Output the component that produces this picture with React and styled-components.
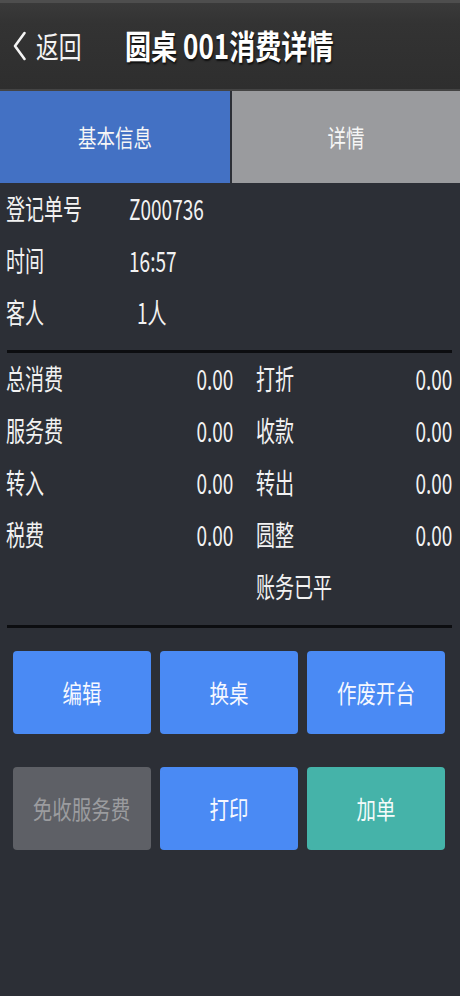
import React from 'react';
import styled, { createGlobalStyle } from 'styled-components';

const GlobalStyle = createGlobalStyle`
    html, body {
        margin: 0;
        padding: 0;
        background: #2c2f36;
    }
    body {
        font-family: "Noto Sans CJK SC", "Noto Sans", sans-serif;
        color: #f2f2f2;
    }
`;

const info = [
    { label: '登记单号', value: 'Z000736' },
    { label: '时间', value: '16:57' },
    { label: '客人', value: '1人', indent: true },
];

const amounts = [
    ['总消费', '0.00', '打折', '0.00'],
    ['服务费', '0.00', '收款', '0.00'],
    ['转入', '0.00', '转出', '0.00'],
    ['税费', '0.00', '圆整', '0.00'],
];

const actions = [
    { text: '编辑', kind: 'blue' },
    { text: '换桌', kind: 'blue' },
    { text: '作废开台', kind: 'blue' },
    { text: '免收服务费', kind: 'disabled' },
    { text: '打印', kind: 'blue' },
    { text: '加单', kind: 'teal' },
];

const BackIcon = () => (
    <svg width="15" height="30" viewBox="0 0 15 30">
        <polyline points="12.5,2 3,15 12.5,28" fill="none" stroke="#f4f4f4" strokeWidth="2.6" strokeLinecap="round" strokeLinejoin="round" />
    </svg>
);

const App = () => {
    return (
        <Page>
            <GlobalStyle />
            <Header>
                <Back>
                    <BackIcon />
                    <Narrow $origin="left" $sx={0.76}>返回</Narrow>
                </Back>
                <Title>圆桌 001消费详情</Title>
            </Header>
            <Tabs>
                <Tab active>
                    <Narrow $sx={0.77}>基本信息</Narrow>
                </Tab>
                <Tab>
                    <Narrow $sx={0.77}>详情</Narrow>
                </Tab>
            </Tabs>
            <InfoList>
                {info.map((row) => (
                    <InfoRow key={row.label}>
                        <InfoLabel>
                            <Narrow $origin="left" $sx={0.68}>{row.label}</Narrow>
                        </InfoLabel>
                        <InfoValue indent={row.indent}>
                            <Narrow $origin="left" $sx={0.68}>{row.value}</Narrow>
                        </InfoValue>
                    </InfoRow>
                ))}
            </InfoList>
            <Divider />
            <AmountGrid>
                {amounts.map((row) => (
                    <React.Fragment key={row[0]}>
                        <AmountCell>
                            <Narrow $origin="left" $sx={0.68}>{row[0]}</Narrow>
                            <Narrow $origin="right" $sx={0.68}>{row[1]}</Narrow>
                        </AmountCell>
                        <AmountCell>
                            <Narrow $origin="left" $sx={0.68}>{row[2]}</Narrow>
                            <Narrow $origin="right" $sx={0.68}>{row[3]}</Narrow>
                        </AmountCell>
                    </React.Fragment>
                ))}
                <AmountCell />
                <AmountCell>
                    <Narrow $origin="left" $sx={0.68}>账务已平</Narrow>
                </AmountCell>
            </AmountGrid>
            <Divider second />
            <Actions>
                {actions.map((a) => (
                    <ActionButton key={a.text} kind={a.kind}>
                        <Narrow $sx={0.78}>{a.text}</Narrow>
                    </ActionButton>
                ))}
            </Actions>
        </Page>
    );
};

// the screen uses a tall condensed font, so text is squeezed horizontally
const Narrow = styled.span`
    display: inline-block;
    white-space: nowrap;
    line-height: 1;
    transform: scaleX(${(p) => p.$sx || 0.7});
    transform-origin: ${(p) => p.$origin || 'center'} center;
`;

const Page = styled.div`
    width: 460px;
    min-height: 996px;
    background: #2c2f36;
`;

const Header = styled.div`
    height: 86px;
    display: flex;
    align-items: center;
    background: linear-gradient(#3a3a3a 0px, #333333 20px, #2e2e2e 100%);
    border-top: 3px solid #4e4e4e;
    border-bottom: 2px solid #444;
    box-sizing: content-box;
`;

const Back = styled.div`
    display: flex;
    align-items: center;
    gap: 9px;
    padding-left: 12px;
    width: 113px;
    font-size: 30px;
    color: #f4f4f4;
    span {
        margin-top: -2px;
    }
`;

const Title = styled.div`
    font-size: 33px;
    font-weight: bold;
    line-height: 1;
    color: #ffffff;
    text-shadow: 1px 2px 2px rgba(0, 0, 0, 0.7);
    white-space: nowrap;
    margin-top: -2px;
    transform: scaleX(0.79);
    transform-origin: left center;
`;

const Tabs = styled.div`
    display: flex;
    height: 92px;
`;

const Tab = styled.div`
    flex: ${(p) => (p.active ? '0 0 230px' : '1')};
    display: flex;
    align-items: center;
    justify-content: center;
    font-size: 24px;
    color: #f6f6f6;
    background: ${(p) => (p.active ? '#4371c4' : '#9a9b9e')};
    border-left: ${(p) => (p.active ? 'none' : '2px solid #2c2f36')};
`;

const InfoList = styled.div`
    display: flex;
    flex-direction: column;
`;

const InfoRow = styled.div`
    display: flex;
    align-items: center;
    height: 52px;
    box-sizing: border-box;
    padding: 0 0 3px 6px;
    font-size: 28px;
`;

const InfoLabel = styled.span`
    width: 123px;
`;

const InfoValue = styled.span`
    padding-left: ${(p) => (p.indent ? '8px' : '0')};
`;

const Divider = styled.div`
    height: 3px;
    margin: ${(p) => (p.second ? '12px 8px 23px 7px' : '11px 8px 0 7px')};
    background: #0c0d10;
`;

const AmountGrid = styled.div`
    display: grid;
    grid-template-columns: 227px 196px;
    column-gap: 23px;
    padding-left: 6px;
`;

const AmountCell = styled.div`
    display: flex;
    justify-content: space-between;
    align-items: center;
    height: 52px;
    box-sizing: border-box;
    padding-bottom: 2px;
    font-size: 28px;
`;

const colors = {
    blue: { bg: '#4a8af4', fg: '#f6f8ff' },
    teal: { bg: '#45b3a9', fg: '#f4fbfa' },
    disabled: { bg: '#5e6066', fg: '#9b9c9f' },
};

const Actions = styled.div`
    display: grid;
    grid-template-columns: repeat(3, 138px);
    column-gap: 9px;
    row-gap: 33px;
    padding-left: 13px;
`;

const ActionButton = styled.div`
    height: 83px;
    border-radius: 4px;
    display: flex;
    align-items: center;
    justify-content: center;
    font-size: 25px;
    background: ${(p) => colors[p.kind].bg};
    color: ${(p) => colors[p.kind].fg};
`;

export default App;
